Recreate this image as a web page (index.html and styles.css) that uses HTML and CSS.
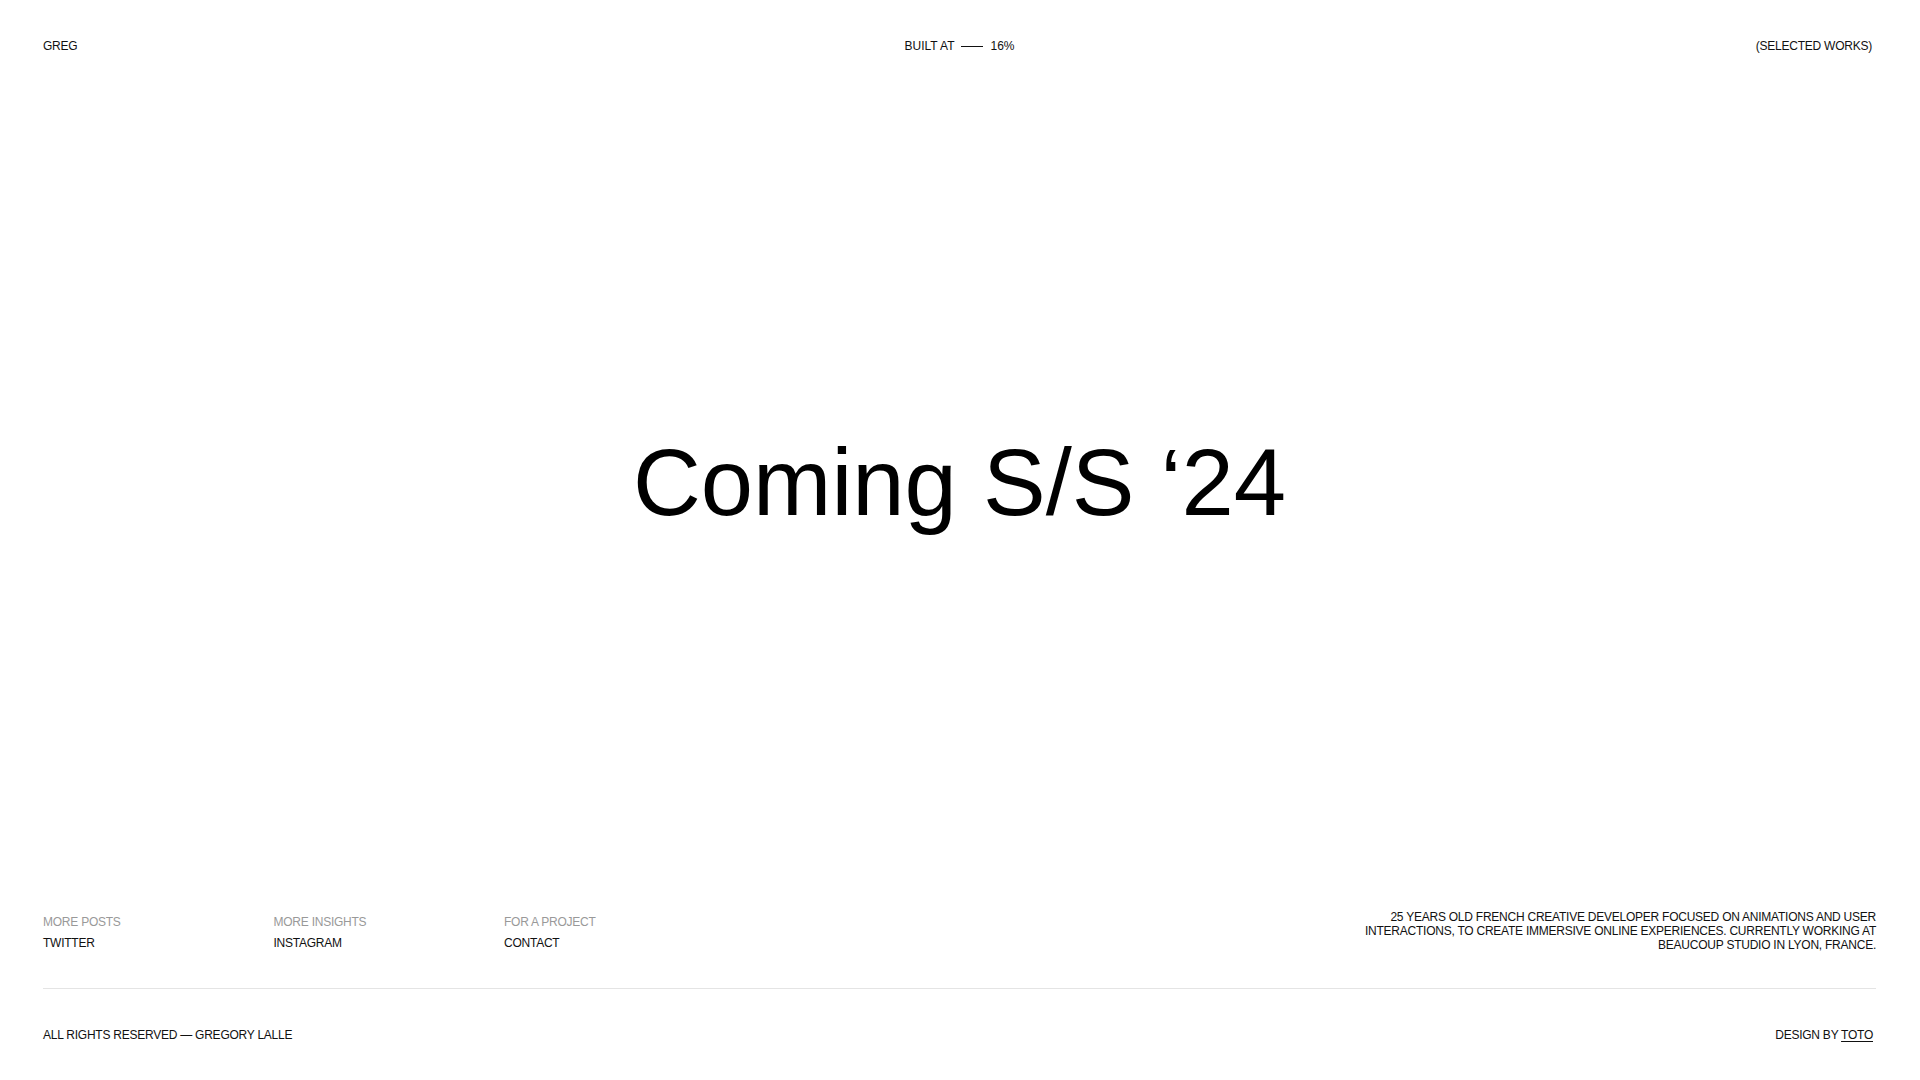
FILE: index.html
```html
<!DOCTYPE html>
<html lang="en">
<head>
<meta charset="utf-8">
<title>Greg — Coming S/S '24</title>
<link rel="stylesheet" href="styles.css">
</head>
<body>
<div class="page">
  <header class="top">
    <a class="brand" href="#">GREG</a>
    <div class="built">
      <span>BUILT AT</span>
      <span class="dash"></span>
      <span>16%</span>
    </div>
    <a class="works" href="#">(SELECTED WORKS)</a>
  </header>

  <main class="hero">
    <h1 class="title">Coming S/S ‘24</h1>
  </main>

  <footer class="foot">
    <div class="foot-top">
      <div class="links">
        <div class="link-col">
          <span class="label">MORE POSTS</span>
          <a class="link" href="#">TWITTER</a>
        </div>
        <div class="link-col">
          <span class="label">MORE INSIGHTS</span>
          <a class="link" href="#">INSTAGRAM</a>
        </div>
        <div class="link-col">
          <span class="label">FOR A PROJECT</span>
          <a class="link" href="#">CONTACT</a>
        </div>
      </div>
      <p class="bio">25 YEARS OLD FRENCH CREATIVE DEVELOPER FOCUSED ON ANIMATIONS AND USER INTERACTIONS, TO CREATE IMMERSIVE ONLINE EXPERIENCES. CURRENTLY WORKING AT BEAUCOUP STUDIO IN LYON, FRANCE.</p>
    </div>
    <div class="rule"></div>
    <div class="foot-bottom">
      <span>ALL RIGHTS RESERVED — GREGORY LALLE</span>
      <span>DESIGN BY <a class="credit" href="#">TOTO</a></span>
    </div>
  </footer>
</div>
</body>
</html>
```

FILE: styles.css
```css
* {
  box-sizing: border-box;
}

html, body {
  margin: 0;
  padding: 0;
  background: #ffffff;
}

body {
  font-family: "Liberation Sans", Arial, sans-serif;
  font-size: 12px;
  line-height: 15px;
  letter-spacing: -0.02em;
  color: #111111;
}

a {
  color: inherit;
  text-decoration: none;
}

.page {
  height: 100vh;
  display: flex;
  flex-direction: column;
  padding: 0 44px 0 43px;
}

.top {
  display: grid;
  grid-template-columns: 1fr auto 1fr;
  align-items: center;
  padding-top: 39px;
}

.works {
  justify-self: end;
  margin-right: 4px;
}

.built {
  display: flex;
  align-items: center;
  gap: 7px;
  letter-spacing: 0;
}

.dash {
  display: block;
  width: 22px;
  height: 1px;
  background: #111111;
}

.hero {
  flex: 1;
  display: flex;
  align-items: center;
  justify-content: center;
  padding-top: 3px;
}

.title {
  margin: 0;
  font-family: "Liberation Sans", Arial, sans-serif;
  font-weight: 400;
  font-size: 94px;
  line-height: 1;
  letter-spacing: 0;
  color: #000000;
}

.foot-top {
  display: flex;
  justify-content: space-between;
  align-items: center;
}

.links {
  display: flex;
  padding-top: 4px;
}

.link-col {
  width: 230.5px;
  display: flex;
  flex-direction: column;
  line-height: 21px;
}

.label {
  color: #999999;
}

.bio {
  margin: 0;
  width: 520px;
  text-align: right;
  line-height: 14px;
}

.rule {
  height: 1px;
  background: #e4e4e4;
  margin: 34px 0 39px;
}

.foot-bottom {
  display: flex;
  justify-content: space-between;
  padding: 0 3px 37px 0;
}

.credit {
  text-decoration: underline;
  text-decoration-thickness: 1px;
  text-underline-offset: 2px;
}
```
